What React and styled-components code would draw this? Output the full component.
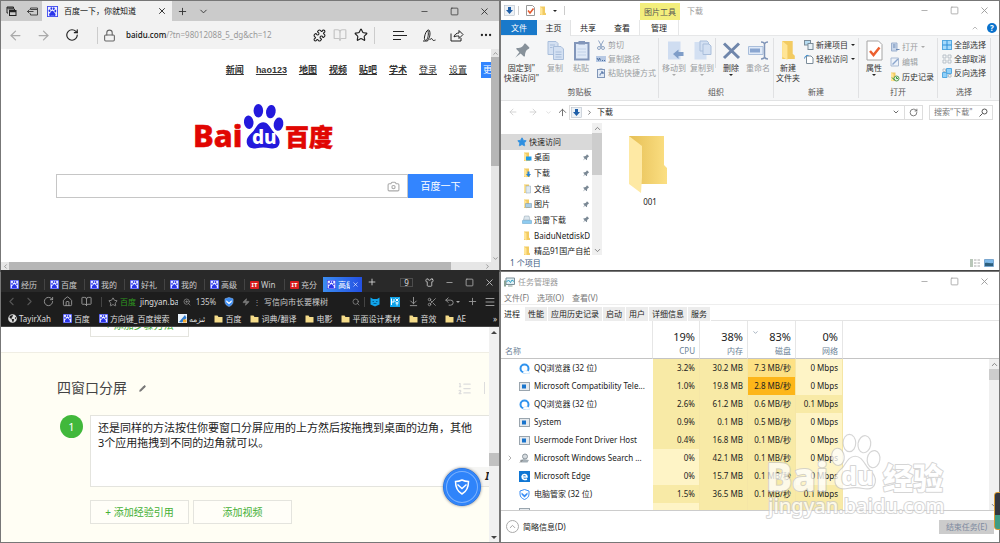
import styled, { createGlobalStyle, css } from "styled-components";
import {
  ArrowDownToLine,
  ArrowLeft,
  ArrowRight,
  ArrowUp,
  BookOpen,
  Camera,
  ChevronDown,
  ChevronLeft,
  ChevronRight,
  ChevronUp,
  House,
  Lock,
  Menu,
  Minus,
  Plus,
  Puzzle,
  RotateCw,
  Scissors,
  Search,
  Shirt,
  Square,
  Star,
  Undo2,
  X,
  Zap,
  ZoomIn,
  ListOrdered,
  Pencil,
  Ellipsis,
} from "lucide-react";
import { TiPin } from "react-icons/ti";
import { FaGlobeAmericas } from "react-icons/fa";

const GlobalStyle = createGlobalStyle`
  *, *::before, *::after {
    box-sizing: border-box;
  }

  body {
    margin: 0;
    background: #222;
    font-family: "Noto Sans", "Noto Sans CJK SC", sans-serif;
    font-size: 8px;
    line-height: 12px;
    color: #222;
  }

  button, input, textarea {
    margin: 0;
    padding: 0;
    border: 0;
    background: none;
    font: inherit;
    color: inherit;
  }

  a {
    color: inherit;
  }

  ul {
    margin: 0;
    padding: 0;
    list-style: none;
  }

  svg {
    display: block;
    flex: none;
  }
`;

/* ---------- shared ---------- */

const Desktop = styled.main`
  position: relative;
  display: grid;
  grid-template-columns: repeat(2, minmax(0, 1fr));
  grid-template-rows: minmax(271px, 1fr) minmax(272px, 1fr);
  height: 100vh;
  overflow: hidden;
`;

const Window = styled.section`
  position: relative;
  display: flex;
  flex-direction: column;
  min-width: 0;
  min-height: 0;
  overflow: hidden;
  background: #fff;
  border: 1px solid #777;
  border-top-color: ${(p) => p.$top || "#777"};
  border-bottom-color: ${(p) => p.$bottom || "#777"};
`;

const Bar = styled.div`
  display: flex;
  align-items: center;
  flex: none;
  white-space: nowrap;
`;

const Cell = styled.button`
  display: flex;
  align-items: center;
  justify-content: center;
  flex: none;
  width: ${(p) => p.$w || 20}px;
  color: ${(p) => p.$color || "inherit"};
`;

const Spacer = styled.div`
  flex: 1;
`;

const Divider = styled.span`
  flex: none;
  width: 1px;
  height: ${(p) => p.$h || 12}px;
  background: ${(p) => p.$color || "#ccc"};
`;

const Controls = styled.div`
  display: flex;
  align-items: center;
  color: ${(p) => p.$color};
`;

const Scrollbar = styled.div`
  display: flex;
  flex-direction: ${(p) => (p.$horizontal ? "row" : "column")};
  flex: none;
  ${(p) => (p.$horizontal ? "height: 8px" : `width: ${p.$size || 8}px`)};
  background: ${(p) => p.$track || "#e6e6e6"};
`;

const ScrollButton = styled.button`
  display: flex;
  align-items: center;
  justify-content: center;
  flex: none;
  width: ${(p) => p.$size || 8}px;
  height: ${(p) => p.$size || 8}px;
  color: #666;
`;

const Track = styled.div`
  display: flex;
  flex-direction: inherit;
  flex: 1;
`;

const Gap = styled.div`
  flex: ${(p) => p.$grow};
`;

const Thumb = styled.div`
  flex: ${(p) => p.$grow};
  background: ${(p) => p.$color || "#b6b6b6"};
`;

function WindowControls({ color, gap = 30 }) {
  return (
    <Controls $color={color}>
      <Cell $w={gap} aria-label="Minimize">
        <Minus size={9} strokeWidth={2} />
      </Cell>
      <Cell $w={gap} aria-label="Maximize">
        <Square size={9} strokeWidth={2} />
      </Cell>
      <Cell $w={gap} aria-label="Close">
        <X size={11} strokeWidth={2} />
      </Cell>
    </Controls>
  );
}

function PawShape() {
  return (
    <>
      <ellipse cx="6" cy="19" rx="5" ry="7" transform="rotate(-6 6 19)" />
      <ellipse cx="16" cy="7" rx="5" ry="7" />
      <ellipse cx="29" cy="8" rx="5" ry="7" transform="rotate(10 29 8)" />
      <ellipse cx="37" cy="21" rx="5" ry="7" transform="rotate(10 37 21)" />
      <path d="M21 19c-5 0-7 5-10 9-4 4-8 7-7 13 1 5 6 6 10 5 5-1 9-1 14 0 5 1 9 0 10-5 1-6-4-9-7-13-3-4-5-9-10-9z" />
    </>
  );
}

function BaiduIcon({ size = 9 }) {
  return (
    <svg width={size} height={size} viewBox="0 0 56 56">
      <rect width="56" height="56" rx="3" fill="#eef0ff" />
      <rect x="2" y="2" width="52" height="52" fill="none" stroke="#3c46ee" strokeWidth="5" />
      <g fill="#2a35ea" transform="translate(7 6) scale(.96)">
        <PawShape />
      </g>
    </svg>
  );
}

function FolderIcon({ size = 10, children }) {
  return (
    <svg width={size} height={size} viewBox="0 0 20 20">
      <path d="M4 1h10v12l2 2v3H4z" fill="#f2cb62" />
      <path d="M4 1l5 4v14l-5-3z" fill="#ffe596" />
      {children}
    </svg>
  );
}

function DownloadsIcon() {
  return (
    <svg width="11" height="11" viewBox="0 0 22 22">
      <rect x="1" y="1" width="20" height="20" fill="#eef2f6" stroke="#a9b4bf" />
      <path d="M8 4h6v6h4l-7 8-7-8h4z" fill="#1f5fa8" />
    </svg>
  );
}

/* ---------- Edge ---------- */

const EdgeTabs = styled(Bar)`
  height: 20px;
  background: #cbcbcb;
  color: #333;
`;

const EdgeTab = styled.div`
  display: flex;
  align-items: center;
  align-self: stretch;
  gap: 6px;
  width: 130px;
  padding: 0 5px;
  background: #f2f2f2;
  color: #111;
`;

const EdgeToolbar = styled(Bar)`
  height: 28px;
  padding-right: 6px;
  background: #f2f2f2;
  color: #222;
`;

const EdgeUrl = styled.div`
  flex: 1;
  overflow: hidden;
  padding-left: 8px;
  color: #999;

  b {
    font-weight: 500;
    color: #111;
  }
`;

const EdgeBody = styled.div`
  display: flex;
  flex: 1;
  min-height: 0;
`;

const BaiduPage = styled.div`
  flex: 1;
  min-width: 0;
  overflow: hidden;
`;

const BaiduNav = styled.nav`
  display: flex;
  align-items: center;
  justify-content: flex-end;
  gap: 12px;
  height: 16px;
  margin-top: 13px;
  font-family: "Liberation Sans", "Noto Sans CJK SC", sans-serif;
  font-size: 9px;
  white-space: nowrap;
`;

const NavLink = styled.a`
  font-weight: ${(p) => (p.$bold ? 700 : 400)};
  color: #333;
`;

const MoreLink = styled.a`
  width: 10px;
  height: 16px;
  margin-left: 2px;
  padding-left: 2px;
  overflow: hidden;
  background: #3385ff;
  color: #fff;
  line-height: 16px;
  text-decoration: none;
`;

const BaiduLogo = styled.svg`
  margin: 25px auto 23px 192px;
  overflow: visible;
  font-family: "Noto Sans", "Noto Sans CJK SC", sans-serif;
  font-weight: 800;
`;

const SearchForm = styled.form`
  display: flex;
  height: 24px;
  margin: 0 18px 0 55px;
`;

const SearchBox = styled.label`
  display: flex;
  align-items: center;
  flex: 1;
  padding: 0 7px;
  border: 1px solid #c6c6c6;
  color: #aaa;

  input {
    flex: 1;
    min-width: 0;
    outline: none;
  }
`;

const SearchButton = styled.button`
  width: 65px;
  background: #3385ff;
  color: #fff;
  font-size: 10px;
`;

function EdgeWindow() {
  return (
    <Window $bottom="#2a2a2a">
      <EdgeTabs>
        <Cell $w={21} aria-label="Tabs set aside">
          <svg width="11" height="11" viewBox="0 0 22 22" fill="none" stroke="#222" strokeWidth="2">
            <path d="M4 14H2V2h13v3M2 4h13" />
            <path d="M5 6h12v3" />
            <rect x="7" y="9" width="13" height="10" />
            <path d="M7 11h13" strokeWidth="3" />
          </svg>
        </Cell>
        <Cell $w={20} aria-label="Set tabs aside">
          <svg width="11" height="9" viewBox="0 0 22 18" fill="none" stroke="#444" strokeWidth="2">
            <path d="M7 5V2h14v14H7v-3M7 5h14M0 9h13M5 5L1 9l4 4" />
          </svg>
        </Cell>
        <EdgeTab>
          <BaiduIcon size={11} />
          百度一下，你就知道
          <Spacer />
          <X size={10} />
        </EdgeTab>
        <Cell $w={21} aria-label="New tab">
          <Plus size={11} />
        </Cell>
        <Cell $w={20} aria-label="Tab previews">
          <ChevronDown size={11} />
        </Cell>
        <Spacer />
        <WindowControls color="#333" />
      </EdgeTabs>
      <EdgeToolbar>
        <Cell $w={28} $color="#aaa" aria-label="Back">
          <ArrowLeft size={15} strokeWidth={2} />
        </Cell>
        <Cell $w={28} $color="#aaa" aria-label="Forward">
          <ArrowRight size={15} strokeWidth={2} />
        </Cell>
        <Cell $w={30} aria-label="Refresh">
          <RotateCw size={14} strokeWidth={2} />
        </Cell>
        <Cell $w={20} as="span">
          <Divider $h={17} />
        </Cell>
        <Cell $w={4} as="span" $color="#666">
          <Lock size={13} strokeWidth={2} />
        </Cell>
        <Cell $w={7} as="span" />
        <EdgeUrl>
          <b>baidu.com</b>/?tn=98012088_5_dg&amp;ch=12
        </EdgeUrl>
        <Cell $w={20} aria-label="Extensions">
          <Puzzle size={13} strokeWidth={2} />
        </Cell>
        <Cell $w={22} $color="#c4c4c4" aria-label="Reading view">
          <BookOpen size={14} strokeWidth={2} />
        </Cell>
        <Cell $w={20} aria-label="Favorite">
          <Star size={14} strokeWidth={2} />
        </Cell>
        <Cell $w={6} as="span">
          <Divider $h={17} />
        </Cell>
        <Cell $w={46} aria-label="Hub">
          <svg width="14" height="9" viewBox="0 0 14 9" stroke="#222" fill="none">
            <path d="M0 .5h11M0 4.5h14M0 8.5h8" />
          </svg>
        </Cell>
        <Cell $w={12} aria-label="Add notes">
          <svg width="14" height="13" viewBox="0 0 28 26" fill="none" stroke="#222" strokeWidth="2">
            <path d="M2 24h9c2-4 5-8 5-14 0-5-1-9-4-8S6 10 5 16s2 8 4 6 5-10 3-18M15 22c2-3 5-4 6-1s3 2 6 1" />
          </svg>
        </Cell>
        <Cell $w={44} aria-label="Share">
          <svg width="14" height="13" viewBox="0 0 28 26" fill="none" stroke="#222" strokeWidth="2">
            <path d="M2 9v15h20v-6M8 16c1-6 6-8 10-8V3l8 8-8 8v-5c-4 0-8 0-10 2z" />
          </svg>
        </Cell>
        <Cell $w={14} aria-label="More">
          <Ellipsis size={14} strokeWidth={2} />
        </Cell>
      </EdgeToolbar>
      <EdgeBody>
        <BaiduPage>
          <BaiduNav>
            {["新闻", "hao123", "地图", "视频", "贴吧", "学术"].map((t) => (
              <NavLink key={t} $bold href="#">
                {t}
              </NavLink>
            ))}
            <NavLink href="#">登录</NavLink>
            <NavLink href="#">设置</NavLink>
            <MoreLink href="#">更</MoreLink>
          </BaiduNav>
          <BaiduLogo width="144" height="48" viewBox="0 0 144 48">
            <g fill="#e10602" stroke="#e10602" strokeWidth=".6">
              <text x="0" y="44" fontSize="31">
                Bai
              </text>
              <text x="92" y="43" fontSize="24">
                百度
              </text>
            </g>
            <g fill="#2319dc" transform="translate(50 1) scale(.96)">
              <PawShape />
            </g>
            <text x="59" y="41" fontSize="19" fill="#fff">
              du
            </text>
          </BaiduLogo>
          <SearchForm>
            <SearchBox>
              <input aria-label="搜索" />
              <Camera size={13} strokeWidth={2} />
            </SearchBox>
            <SearchButton type="button">百度一下</SearchButton>
          </SearchForm>
        </BaiduPage>
        <Scrollbar>
          <ScrollButton aria-label="Up">
            <ChevronUp size={7} />
          </ScrollButton>
          <Track>
            <Thumb $grow={109} />
            <Gap $grow={88} />
          </Track>
          <ScrollButton aria-label="Down">
            <ChevronDown size={7} />
          </ScrollButton>
        </Scrollbar>
      </EdgeBody>
      <Scrollbar $horizontal>
        <ScrollButton aria-label="Left">
          <ChevronLeft size={7} />
        </ScrollButton>
        <Track>
          <Thumb $grow={443} />
          <Gap $grow={32} />
        </Track>
        <ScrollButton aria-label="Right">
          <ChevronRight size={7} />
        </ScrollButton>
        <Gap $grow="0 0 8px" />
      </Scrollbar>
    </Window>
  );
}

/* ---------- Explorer ---------- */

const TitleBar = styled(Bar)`
  height: 19px;
  color: #999;
`;

const ToolTab = styled.span`
  align-self: stretch;
  width: 40px;
  margin: 2px 7px 0 75px;
  background: #f3ee7c;
  color: #555;
  line-height: 17px;
  text-align: center;
`;

const RibbonTabs = styled(Bar)`
  height: 16px;
  border-bottom: 1px solid #e6e7e8;
`;

const RibbonTab = styled.button`
  flex: none;
  align-self: stretch;
  width: ${(p) => p.$w}px;

  ${(p) =>
    p.$file &&
    css`
      background: #1979ca;
      color: #fff;
    `}
  ${(p) =>
    p.$active &&
    css`
      border-right: 1px solid #e2e3e4;
      background: #f5f6f7;
      margin-bottom: -1px;
    `}
  ${(p) =>
    p.$tool &&
    css`
      border: 1px solid #e6e7e8;
      border-width: 0 1px;
    `}
`;

const Help = styled.span`
  width: 10px;
  height: 10px;
  margin: 0 2px 0 8px;
  border-radius: 50%;
  background: #0a72cc;
  color: #fff;
  font-weight: 700;
  line-height: 10px;
  text-align: center;
`;

const Ribbon = styled.div`
  display: flex;
  flex: none;
  height: 65px;
  background: #f5f6f7;
  border-bottom: 1px solid #e2e3e4;
`;

const Group = styled.div`
  display: flex;
  flex-direction: column;
  flex: none;
  width: ${(p) => p.$w}px;
  margin: 2px 0;
  border-right: 1px solid #e0e1e3;
`;

const GroupItems = styled.div`
  display: flex;
  flex: 1;
`;

const GroupLabel = styled.div`
  color: #555;
  text-align: center;
`;

const BigButton = styled.button`
  display: flex;
  flex-direction: column;
  align-items: center;
  flex: none;
  width: ${(p) => p.$w || 26}px;
  padding-top: 2px;
  color: ${(p) => (p.$off ? "#9a9da1" : "#333")};
  line-height: 10px;
  white-space: nowrap;

  svg:first-child {
    margin-bottom: 2px;
  }
`;

const SmallList = styled.div`
  display: flex;
  flex-direction: column;
  gap: ${(p) => p.$gap || 1}px;
  padding: ${(p) => p.$top || 0}px 0 0 ${(p) => p.$pad || 2}px;
`;

const SmallButton = styled.button`
  display: flex;
  align-items: center;
  gap: 2px;
  height: 13px;
  color: ${(p) => (p.$off ? "#9a9da1" : "#333")};
  white-space: nowrap;
`;

const Caret = styled.span`
  width: 0;
  margin: ${(p) => (p.$under ? "1px 0 0" : "0 0 0 1px")};
  border: 2px solid transparent;
  border-top-color: ${(p) => (p.$off ? "#aaa" : "#222")};
  border-bottom: 0;
`;

const AddressBar = styled(Bar)`
  height: 22px;
  color: #999;
`;

const PathBox = styled.div`
  display: flex;
  align-items: center;
  flex: 1;
  height: 15px;
  gap: 4px;
  padding-left: 1px;
  border: 1px solid #ddd;
  color: #222;
`;

const FindBox = styled.label`
  display: flex;
  align-items: center;
  width: 64px;
  height: 15px;
  margin: 0 6px;
  padding: 0 4px;
  border: 1px solid #ddd;
  color: #777;

  input {
    flex: 1;
    min-width: 0;
  }

  input::placeholder {
    color: #777;
    opacity: 1;
  }
`;

const ExplorerBody = styled.div`
  display: flex;
  flex: 1;
  min-height: 0;
  overflow: hidden;
`;

const Places = styled.ul`
  display: flex;
  flex-direction: column;
  flex: none;
  width: 91px;
  height: 125px;
  margin-top: 11px;
`;

const Place = styled.li`
  display: flex;
  align-items: center;
  flex: 1;
  gap: 2px;
  padding: 0 2px 0 ${(p) => (p.$top ? 16 : 21)}px;
  overflow: hidden;
  white-space: nowrap;
  background: ${(p) => (p.$top ? "#d9d9d9" : "transparent")};

  span {
    flex: 1;
    overflow: hidden;
  }
`;

const Files = styled.div`
  flex: 1;
  padding: 12px 0 0 22px;
`;

const FileItem = styled.figure`
  display: flex;
  flex-direction: column;
  align-items: center;
  gap: 1px;
  width: 52px;
  margin: 0;
`;

const StatusBar = styled(Bar)`
  height: 15px;
  padding: 0 5px 0 9px;
  gap: 4px;
  color: #3a5a80;
`;

function CopyIcon() {
  return (
    <svg width="19" height="21" viewBox="0 0 38 42" fill="#d3e0f2" stroke="#a9bedb" strokeWidth="2">
      <path d="M4 3h16l4 4v22H4z" />
      <path d="M15 13h15l5 5v21H15z" />
      <path d="M8 10h10M8 15h5M19 24h12M19 29h12M19 34h12" />
    </svg>
  );
}

function CopyToIcon() {
  return (
    <svg width="19" height="21" viewBox="0 0 38 42" fill="#d3e0f2" stroke="#a9bedb" strokeWidth="2">
      <path d="M3 4h24v35H3z" stroke="none" />
      <path d="M14 2h14l3 3v17H14z" />
      <path d="M20 8h12l4 4v17H20z" />
    </svg>
  );
}

function TinyIcon({ kind }) {
  return (
    <svg width="10" height="10" viewBox="0 0 20 20" fill="none" strokeWidth="2">
      {kind === "cut" && (
        <g stroke="#8fa5c4">
          <path d="M5 1l7 13M15 1L8 14" />
          <circle cx="6" cy="16" r="3" />
          <circle cx="14" cy="16" r="3" />
        </g>
      )}
      {kind === "path" && (
        <>
          <rect x="0" y="4" width="20" height="12" fill="#b7c9e4" />
          <path d="M2 8l3 5 2-5 2 5M12 13h2M16 13h2" stroke="#4d6f9f" />
        </>
      )}
      {kind === "link" && (
        <>
          <rect x="3" y="3" width="14" height="16" fill="#e2eaf5" stroke="#8096b8" />
          <path d="M7 1h6v3H7z" fill="#8096b8" />
          <path d="M8 15c0-4 2-5 5-5M10 8h4v4" stroke="#41659c" />
        </>
      )}
      {kind === "newitem" && (
        <>
          <rect x="1" y="1" width="12" height="9" fill="#b6dcf1" stroke="#7b8c99" />
          <rect x="8" y="7" width="10" height="12" fill="#e8f2f8" stroke="#7b8c99" />
        </>
      )}
      {kind === "easy" && (
        <>
          <path d="M5 4h9l4 4v11H5z" fill="#fff" stroke="#7b8c99" />
          <path d="M1 9c1-5 4-7 8-6" stroke="#3c8dd0" />
        </>
      )}
      {kind === "open" && (
        <>
          <path d="M3 2h11v16H3z" fill="#c8d6ea" stroke="#9db1cf" />
          <path d="M6 6h5M6 10h5M12 15h7" stroke="#6d8ab5" />
        </>
      )}
      {kind === "edit" && (
        <>
          <path d="M2 2h15v16H2z" fill="#edf2f9" stroke="#a9bad3" />
          <path d="M5 15L16 4" stroke="#8ba6cd" strokeWidth="3" />
        </>
      )}
      {kind === "history" && (
        <>
          <path d="M2 1h9v17H2z" fill="#f2cb62" />
          <path d="M2 1l5 3v15l-5-2z" fill="#ffe596" />
          <circle cx="13" cy="13" r="5" fill="#e4efe4" stroke="#5a9a54" />
          <path d="M4 11l5 5M13 10v3h3" stroke="#2f9a35" />
        </>
      )}
      {kind === "all" && (
        <>
          <rect x="1" y="1" width="18" height="18" fill="#a5dafb" stroke="#56a9e0" />
          <path d="M10 1v18M1 10h18" stroke="#2f8fd8" />
        </>
      )}
      {kind === "none" && (
        <g stroke="#b8c0c8">
          <path d="M2 2h6v6H2zM12 2h6v6h-6zM2 12h6v6H2zM12 12h6v6h-6z" />
        </g>
      )}
      {kind === "invert" && (
        <>
          <path d="M9 1h10v10H9zM1 9h9v10H1z" fill="#8fd0fa" stroke="#56a9e0" />
          <path d="M2 2h5v5H2zM13 13h5v5h-5z" stroke="#b8c0c8" />
        </>
      )}
    </svg>
  );
}

const places = [
  { name: "桌面", pin: true, badge: <path d="M8 9h11v8H8z" fill="#1e9be8" /> },
  { name: "下载", pin: true, badge: <path d="M11 7h4v5h3l-5 6-5-6h3z" fill="#2583d8" /> },
  { name: "文档", pin: true, badge: <path d="M8 4h9v14H8z" fill="#dfeaf2" stroke="#8aa3b5" /> },
  { name: "图片", pin: true, badge: <path d="M7 9h12v8H7z" fill="#a9cde6" stroke="#7795a8" /> },
  { name: "迅雷下载", pin: true, drive: true },
  { name: "BaiduNetdiskDownload" },
  { name: "精品91国产自拍" },
];

function ExplorerWindow() {
  return (
    <Window $bottom="#444">
      <TitleBar>
        <Cell $w={17} as="span">
          <DownloadsIcon />
        </Cell>
        <Divider $h={9} />
        <Cell $w={22} aria-label="属性">
          <svg width="9" height="11" viewBox="0 0 18 22">
            <path d="M1 1h12l4 4v16H1z" fill="#fff" stroke="#999" strokeWidth="2" />
            <path d="M4 11l4 5 7-9" fill="none" stroke="#e5562a" strokeWidth="3" />
          </svg>
        </Cell>
        <Cell $w={4} aria-label="新建文件夹">
          <FolderIcon />
        </Cell>
        <Cell $w={19} aria-label="自定义">
          <Caret />
        </Cell>
        <Divider $h={9} />
        <ToolTab>图片工具</ToolTab>
        下载
        <Spacer />
        <WindowControls color="#999" />
      </TitleBar>
      <RibbonTabs>
        <RibbonTab $w={36} $file>
          文件
        </RibbonTab>
        <RibbonTab $w={34} $active>
          主页
        </RibbonTab>
        <RibbonTab $w={34}>共享</RibbonTab>
        <RibbonTab $w={34}>查看</RibbonTab>
        <RibbonTab $w={40} $tool>
          管理
        </RibbonTab>
        <Spacer />
        <ChevronUp size={8} color="#999" />
        <Help>?</Help>
      </RibbonTabs>
      <Ribbon>
        <Group $w={158}>
          <GroupItems>
            <BigButton $w={41}>
              <TiPin size={21} color="#87919a" />
              固定到"
              <br />
              快速访问"
            </BigButton>
            <BigButton $off>
              <CopyIcon />
              复制
            </BigButton>
            <BigButton $off>
              <svg width="19" height="21" viewBox="0 0 38 42">
                <rect x="6" y="6" width="27" height="33" fill="#dfe9f7" stroke="#8296ba" strokeWidth="4" />
                <rect x="13" y="2" width="13" height="7" fill="#8296ba" />
                <path d="M11 18h17M11 24h17M11 30h17" stroke="#c1d1e8" strokeWidth="2" />
              </svg>
              粘贴
            </BigButton>
            <SmallList>
              <SmallButton $off>
                <TinyIcon kind="cut" />
                剪切
              </SmallButton>
              <SmallButton $off>
                <TinyIcon kind="path" />
                复制路径
              </SmallButton>
              <SmallButton $off>
                <TinyIcon kind="link" />
                粘贴快捷方式
              </SmallButton>
            </SmallList>
          </GroupItems>
          <GroupLabel>剪贴板</GroupLabel>
        </Group>
        <Group $w={115}>
          <GroupItems>
            <BigButton $off $w={30}>
              <svg width="19" height="21" viewBox="0 0 38 42">
                <path d="M6 3h25v36H6z" fill="#cfddf1" />
                <path d="M16 28l11-9v5h10v8H27v6z" fill="#7f9dc8" />
              </svg>
              移动到
              <Caret $under $off />
            </BigButton>
            <BigButton $off>
              <CopyToIcon />
              复制到
              <Caret $under $off />
            </BigButton>
            <Divider $h={30} $color="#dcdde0" />
            <BigButton $w={30}>
              <svg width="19" height="21" viewBox="0 0 38 42">
                <path d="M4 7l30 29M34 7L4 36" stroke="#6f86ab" strokeWidth="6" />
              </svg>
              删除
              <Caret $under />
            </BigButton>
            <BigButton $off $w={24}>
              <svg width="21" height="21" viewBox="0 0 42 42" fill="none">
                <path d="M1 13h29v16H1z" fill="#dfe9f7" stroke="#a9bedb" strokeWidth="2" />
                <path d="M4 17h20v8H4z" fill="#8aa6d0" />
                <path d="M26 4c4 0 6 1 7 4 1-3 3-4 7-4M33 8v26M26 38c4 0 6-1 7-4 1 3 3 4 7 4" stroke="#8095b8" strokeWidth="3" />
              </svg>
              重命名
            </BigButton>
          </GroupItems>
          <GroupLabel>组织</GroupLabel>
        </Group>
        <Group $w={85}>
          <GroupItems>
            <BigButton $w={28}>
              <FolderIcon size={21} />
              新建
              <br />
              文件夹
            </BigButton>
            <SmallList>
              <SmallButton>
                <TinyIcon kind="newitem" />
                新建项目
                <Caret />
              </SmallButton>
              <SmallButton>
                <TinyIcon kind="easy" />
                轻松访问
                <Caret />
              </SmallButton>
            </SmallList>
          </GroupItems>
          <GroupLabel>新建</GroupLabel>
        </Group>
        <Group $w={79}>
          <GroupItems>
            <BigButton $w={30}>
              <svg width="17" height="21" viewBox="0 0 34 42" fill="none">
                <path d="M2 2h23l7 7v31H2z" fill="#fff" stroke="#a5a5a5" strokeWidth="2" />
                <path d="M8 22l7 8 12-15" stroke="#ec6030" strokeWidth="5" />
              </svg>
              属性
              <Caret $under />
            </BigButton>
            <SmallList $gap={2} $pad={1} $top={2}>
              <SmallButton $off>
                <TinyIcon kind="open" />
                打开
                <Caret $off />
              </SmallButton>
              <SmallButton $off>
                <TinyIcon kind="edit" />
                编辑
              </SmallButton>
              <SmallButton>
                <TinyIcon kind="history" />
                历史记录
              </SmallButton>
            </SmallList>
          </GroupItems>
          <GroupLabel>打开</GroupLabel>
        </Group>
        <Group $w={53}>
          <GroupItems>
            <SmallList $pad={4}>
              <SmallButton>
                <TinyIcon kind="all" />
                全部选择
              </SmallButton>
              <SmallButton>
                <TinyIcon kind="none" />
                全部取消
              </SmallButton>
              <SmallButton>
                <TinyIcon kind="invert" />
                反向选择
              </SmallButton>
            </SmallList>
          </GroupItems>
          <GroupLabel>选择</GroupLabel>
        </Group>
      </Ribbon>
      <AddressBar>
        <Cell $w={24} $color="#ccc" aria-label="后退">
          <ArrowLeft size={10} />
        </Cell>
        <Cell $w={16} $color="#ccc" aria-label="前进">
          <ArrowRight size={10} />
        </Cell>
        <Cell $w={14} $color="#ccc" aria-label="最近">
          <ChevronDown size={7} />
        </Cell>
        <Cell $w={14} $color="#666" aria-label="上移">
          <ArrowUp size={11} />
        </Cell>
        <PathBox>
          <DownloadsIcon />
          <ChevronRight size={7} />
          下载
          <Spacer />
          <ChevronDown size={8} />
          <Divider $h={13} $color="#ddd" />
          <RotateCw size={9} color="#555" />
          <span />
        </PathBox>
        <FindBox>
          <input aria-label="搜索下载" placeholder={'搜索"下载"'} />
          <svg width="9" height="9" viewBox="0 0 18 18" fill="none" stroke="#555" strokeWidth="2">
            <circle cx="11" cy="7" r="5" />
            <path d="M7 11l-6 6" />
          </svg>
        </FindBox>
      </AddressBar>
      <ExplorerBody>
        <Places>
          <Place $top>
            <Star size={10} fill="#2f8fe0" color="#2f8fe0" />
            <span>快速访问</span>
          </Place>
          {places.map((p) => (
            <Place key={p.name}>
              {p.drive ? (
                <svg width="10" height="10" viewBox="0 0 20 20">
                  <path d="M5 2h9l2 8H3z" fill="#dce6ed" stroke="#8fa2b0" />
                  <path d="M1 11h18v6H1z" fill="#8ecbf0" stroke="#5d9ec8" />
                </svg>
              ) : (
                <FolderIcon>{p.badge}</FolderIcon>
              )}
              <span>{p.name}</span>
              {p.pin && <TiPin size={9} color="#7a8894" />}
            </Place>
          ))}
        </Places>
        <Scrollbar $size={10} $track="#f0f0f0">
          <ScrollButton $size={10} aria-label="Up">
            <ChevronUp size={9} />
          </ScrollButton>
          <Track>
            <Thumb $grow={42} $color="#cdcdcd" />
            <Gap $grow={70} />
          </Track>
          <ScrollButton $size={10} aria-label="Down">
            <ChevronDown size={9} />
          </ScrollButton>
        </Scrollbar>
        <Files>
          <FileItem>
            <svg width="46" height="60" viewBox="0 0 46 60">
              <defs>
                <linearGradient id="fold" x1="0" x2="1">
                  <stop offset="0" stopColor="#e6bf55" />
                  <stop offset="1" stopColor="#fbdf83" />
                </linearGradient>
              </defs>
              <path d="M2 1h35v29l3 3v16H2z" fill="url(#fold)" />
              <path d="M2 1l13 10v31l-1 16L2 49z" fill="#fee9a4" />
            </svg>
            <figcaption>001</figcaption>
          </FileItem>
        </Files>
      </ExplorerBody>
      <StatusBar>
        1 个项目
        <Spacer />
        <svg width="10" height="8" viewBox="0 0 20 16">
          <path d="M0 0h6v16H0z" fill="#b9c7b9" />
          <path d="M8 2h12M8 8h12M8 14h12" stroke="#aaa" strokeWidth="2" strokeDasharray="5 2" />
        </svg>
        <svg width="10" height="8" viewBox="0 0 20 16">
          <path d="M1 1h18v14H1z" fill="#7db9ea" stroke="#7aa7cf" strokeWidth="2" />
          <path d="M2 8c6-2 10 2 16 0v6H2z" fill="#2d5f7d" />
        </svg>
      </StatusBar>
    </Window>
  );
}

/* ---------- QQ browser ---------- */

const QqTabs = styled(Bar)`
  height: 20px;
  padding-left: 4px;
  background: #292929;
  color: #ddd;
`;

const QqTab = styled.div`
  display: flex;
  align-items: center;
  flex: none;
  gap: 2px;
  width: ${(p) => (p.$active ? 39 : 40)}px;
  height: 15px;
  margin-top: 5px;
  padding-left: 5px;
  color: ${(p) => (p.$active ? "#fff" : "#ccc")};

  ${(p) =>
    p.$active &&
    css`
      margin-left: -2px;
      padding: 0 3px 0 4px;
      background: linear-gradient(90deg, #3c8df2, #2350e2);
    `}
`;

const TabName = styled.div`
  flex: 1;
  min-width: 0;
  overflow: hidden;
`;

const ItBadge = styled.b`
  width: 9px;
  height: 8px;
  border-radius: 1px;
  background: #d81e1e;
  color: #fff;
  font-size: 6px;
  line-height: 8px;
  text-align: center;
`;

const Count = styled.span`
  width: 13px;
  height: 9px;
  margin-right: 6px;
  border: 1px solid #4d4d4d;
  line-height: 7px;
  text-align: center;
`;

const QqToolbar = styled(Bar)`
  height: 19px;
  padding-left: 1px;
  background: #1d1d1d;
  color: #999;
`;

const Host = styled.div`
  width: 58px;
  overflow: hidden;
  color: #ddd;

  b {
    margin-right: 4px;
    font-weight: 400;
    color: #2e9b1f;
  }
`;

const QqSearch = styled.label`
  display: flex;
  align-items: center;
  flex: 1;
  min-width: 0;
  padding-right: 4px;

  input {
    flex: 1;
    min-width: 0;
    color: #ccc;
  }
`;

const Bookmarks = styled(Bar)`
  height: 16px;
  gap: 9px;
  padding: 0 2px 0 7px;
  background: #1d1d1d;
  border-bottom: 1px solid #444;
  color: #ddd;
`;

const Bookmark = styled.a`
  display: flex;
  align-items: center;
  gap: 2px;
  text-decoration: none;

  &:first-child {
    margin-right: 3px;
  }
`;

const QqBody = styled.div`
  display: flex;
  flex: 1;
  min-height: 0;
`;

const QqPage = styled.div`
  position: relative;
  display: flex;
  flex-direction: column;
  flex: 1;
  min-width: 0;
  overflow: hidden;
  background: #fffef4;
`;

const TopStrip = styled.div`
  display: flex;
  align-items: flex-start;
  height: 26px;
  padding-left: 89px;
  background: #fff;
  border-bottom: 1px solid #f0eee4;
`;

const AddButton = styled.button`
  width: 99px;
  height: 24px;
  border: 1px solid #e4e4de;
  background: ${(p) => (p.$clipped ? "#fff" : "#fffef8")};
  color: #45b035;
  font-size: 10px;
  line-height: 22px;

  ${(p) => p.$clipped && "margin-top: -14px;"}
`;

const StepTitle = styled.h2`
  display: flex;
  align-items: center;
  gap: 12px;
  margin: 25px 4px 17px 56px;
  color: #444;
  font-size: 14px;
  font-weight: 400;
  line-height: 20px;
`;

const StepRow = styled.div`
  display: flex;
  align-items: flex-start;
  gap: 7px;
  padding-left: 59px;
`;

const StepNumber = styled.span`
  flex: none;
  width: 23px;
  height: 23px;
  border-radius: 50%;
  background: #41b83b;
  color: #fff;
  font-size: 11px;
  line-height: 23px;
  text-align: center;
`;

const StepText = styled.textarea`
  flex: 1;
  min-width: 0;
  height: 72px;
  padding: 4px 0 0 7px;
  border: 1px solid #e4e4de;
  border-right: 0;
  overflow: hidden;
  background: #fff;
  color: #222;
  font-size: 11px;
  line-height: 15px;
  white-space: pre;
  resize: none;
`;

const AddRow = styled.div`
  display: flex;
  gap: 4px;
  padding: 13px 0 0 89px;
`;

/* floats over the editor */
const GuardButton = styled.button`
  position: absolute;
  right: 8px;
  bottom: 36px;
  display: flex;
  align-items: center;
  justify-content: center;
  width: 38px;
  height: 38px;
  border: 1px solid #2a78e8;
  border-radius: 50%;
  background: #2f84fa;
  box-shadow: inset 0 0 0 2px #2f84fa, inset 0 0 0 3px #7db2fc, 0 0 3px #888;
`;

/* flyout tucked behind the guard button */
const Flyout = styled.div`
  position: absolute;
  right: 0;
  bottom: 56px;
  width: 30px;
  height: 19px;
  background: #f6f6f4;
  font-size: 10px;
  font-style: italic;
  font-weight: 700;
  line-height: 19px;
  text-align: right;
`;

function ShieldIcon() {
  return (
    <svg width="10" height="10" viewBox="0 0 22 22">
      <path d="M11 1l9 3v6c0 6-4 9-9 11-5-2-9-5-9-11V4z" fill="#3b8df5" stroke="#a8cdfb" />
      <path d="M5 7l6 5 6-5v4l-6 5-6-5z" fill="#fff" />
    </svg>
  );
}

function YellowFolder() {
  return (
    <svg width="9" height="8" viewBox="0 0 18 16">
      <path d="M1 1h6l2 3h8v11H1z" fill="#f5dc8a" />
    </svg>
  );
}

const tabs = ["经历", "百度", "我的", "好礼", "我的", "高级", "Win", "充分"];
const folders = ["百度", "词典/翻译", "电影", "平面设计素材", "音效", "AE"];

function QqBrowserWindow() {
  return (
    <Window $top="#292929">
      <QqTabs>
        {tabs.map((t, i) => (
          <QqTab key={i}>
            {i < 6 ? <BaiduIcon /> : <ItBadge>IT</ItBadge>}
            <TabName>{t}</TabName>
            {i < 7 && <Divider $h={11} $color="#444" />}
          </QqTab>
        ))}
        <QqTab $active>
          <BaiduIcon />
          <TabName>高级</TabName>
          <X size={7} />
        </QqTab>
        <Cell $w={20} aria-label="New tab">
          <Plus size={10} />
        </Cell>
        <Spacer />
        <Count>9</Count>
        <Cell $w={20} aria-label="Skins">
          <Shirt size={9} />
        </Cell>
        <WindowControls color="#bbb" gap={20} />
      </QqTabs>
      <QqToolbar>
        <Cell $w={18} $color="#555" aria-label="Back">
          <ChevronLeft size={13} />
        </Cell>
        <Cell $w={19} $color="#555" aria-label="Forward">
          <ChevronRight size={13} />
        </Cell>
        <Cell $w={19} aria-label="Reload">
          <RotateCw size={11} />
        </Cell>
        <Cell $w={19} aria-label="Home">
          <House size={11} />
        </Cell>
        <Cell $w={19} aria-label="Reader">
          <BookOpen size={11} />
        </Cell>
        <Cell $w={10} as="span">
          <Divider $h={10} $color="#444" />
        </Cell>
        <Cell $w={14} aria-label="Bookmark">
          <Star size={10} />
        </Cell>
        <Host>
          <b>百度</b>jingyan.baidu.com
        </Host>
        <Cell $w={18} aria-label="Zoom">
          <ZoomIn size={8} />
        </Cell>
        <Cell $w={20} as="span" $color="#ccc">
          135%
        </Cell>
        <Cell $w={26} as="span">
          <ShieldIcon />
        </Cell>
        <Cell $w={8} as="span">
          <Zap size={8} fill="#777" color="#777" />
        </Cell>
        <Cell $w={14} as="span">
          ⋮
        </Cell>
        <QqSearch>
          <input aria-label="Search" defaultValue="写信向市长要棵树" />
          <Search size={8} />
        </QqSearch>
        <Divider $h={10} $color="#444" />
        <Cell $w={20} aria-label="Shopping">
          <svg width="10" height="10" viewBox="0 0 20 20">
            <path d="M1 1l5 3h8l5-3v14l-9 4-9-4z" fill="#11a4ea" />
            <path d="M5 9h3M12 9h3M7 13h6" stroke="#075f91" strokeWidth="2" />
          </svg>
        </Cell>
        <Cell $w={19} aria-label="Translate">
          <svg width="10" height="10" viewBox="0 0 20 20">
            <rect width="20" height="20" fill="#11a4ea" />
            <path d="M3 3v13M3 10h5V4M11 3l6 6M17 3l-6 6M14 10v7M11 12h6" fill="none" stroke="#fff" strokeWidth="2" />
          </svg>
        </Cell>
        <Cell $w={19} aria-label="Downloads">
          <ArrowDownToLine size={11} />
        </Cell>
        <Cell $w={18} aria-label="Screenshot">
          <Scissors size={10} />
        </Cell>
        <Cell $w={22} aria-label="Undo">
          <Undo2 size={11} />
          <Caret $off />
        </Cell>
        <Cell $w={18} aria-label="Add">
          <Plus size={11} />
        </Cell>
        <Cell $w={18} aria-label="Menu">
          <Menu size={12} />
        </Cell>
      </QqToolbar>
      <Bookmarks>
        <Bookmark href="#">
          <FaGlobeAmericas size={9} />
          TayirXah
        </Bookmark>
        <Bookmark href="#">
          <BaiduIcon />
          百度
        </Bookmark>
        <Bookmark href="#">
          <BaiduIcon />
          方向键_百度搜索
        </Bookmark>
        <Bookmark href="#">
          <svg width="9" height="9" viewBox="0 0 18 18">
            <rect width="18" height="18" fill="#e9f2fb" />
            <path d="M2 16L14 2l3 6-9 9z" fill="#2c7ad0" />
            <path d="M10 11h7v6h-7z" fill="#f0a52c" />
          </svg>
          ئىزمە
        </Bookmark>
        {folders.map((f) => (
          <Bookmark key={f} href="#">
            <YellowFolder />
            {f}
          </Bookmark>
        ))}
        <Spacer />
        »
      </Bookmarks>
      <QqBody>
        <QqPage>
          <TopStrip>
            <AddButton $clipped>+ 添加步骤方法</AddButton>
          </TopStrip>
          <StepTitle>
            四窗口分屏
            <Pencil size={7} fill="#777" color="#777" />
            <Spacer />
            <ListOrdered size={15} color="#ddd" />
            <Divider $h={12} $color="#ddd" />
          </StepTitle>
          <StepRow>
            <StepNumber>1</StepNumber>
            <StepText
              aria-label="步骤 1"
              defaultValue={
                "还是同样的方法按住你要窗口分屏应用的上方然后按拖拽到桌面的边角，其他\n3个应用拖拽到不同的边角就可以。"
              }
            />
          </StepRow>
          <AddRow>
            <AddButton>+ 添加经验引用</AddButton>
            <AddButton>添加视频</AddButton>
          </AddRow>
          <Flyout>I</Flyout>
          <GuardButton aria-label="电脑管家">
            <svg width="16" height="16" viewBox="0 0 32 32" fill="none" stroke="#fff" strokeWidth="3">
              <path d="M16 2c4 2 8 3 13 3 0 13-4 20-13 25C7 25 3 18 3 5c5 0 9-1 13-3z" />
              <path d="M7 11l9 8 9-8" />
            </svg>
          </GuardButton>
        </QqPage>
        <Scrollbar $size={10} $track="#f1f1f1">
          <ScrollButton $size={10} aria-label="Up">
            <svg width="6" height="3" viewBox="0 0 6 3">
              <path d="M0 3l3-3 3 3z" fill="#444" />
            </svg>
          </ScrollButton>
          <Track>
            <Gap $grow={116} />
            <Thumb $grow={13} $color="#c1c1c1" />
            <Gap $grow={66} />
          </Track>
          <ScrollButton $size={10} aria-label="Down">
            <svg width="6" height="3" viewBox="0 0 6 3">
              <path d="M0 0l3 3 3-3z" fill="#444" />
            </svg>
          </ScrollButton>
        </Scrollbar>
      </QqBody>
    </Window>
  );
}

/* ---------- Task manager ---------- */

const MenuBar = styled(Bar)`
  height: 14px;
  gap: 8px;
  padding-left: 3px;
  border-bottom: 1px solid #eee;
  color: #777;
`;

const TaskTabs = styled(Bar)`
  height: 16px;
  padding-top: 2px;
  border-bottom: 1px solid #e4e4e4;
`;

const TaskTab = styled.button`
  height: 14px;
  padding: 0 3px;
  border-right: 1px solid #fff;
  background: ${(p) => (p.$active ? "#fff" : "#ececec")};
  color: #222;

  &:first-child {
    padding-right: 4px;
  }
`;

const TaskBody = styled.div`
  display: flex;
  flex: 1;
  min-height: 0;
  overflow: hidden;
  border-bottom: 1px solid #ccc;
`;

const TableArea = styled.div`
  flex: 1;
  min-width: 0;
  overflow: hidden;
`;

const TaskTable = styled.table`
  width: 100%;
  table-layout: fixed;
  border-collapse: separate;
  border-spacing: 0;

  th {
    height: 38px;
    padding: 0 4px 1px 0;
    border-right: 1px solid #e6e6e6;
    border-bottom: 1px solid #c4c4c4;
    color: #6b7f96;
    font-weight: 400;
    text-align: right;
    vertical-align: bottom;
  }

  th:first-child {
    padding-left: 4px;
    text-align: left;
  }

  th:last-child {
    border-right: 0;
  }
`;

const Col = styled.col`
  width: ${(p) => p.$w}px;
`;

const Percent = styled.div`
  color: #222;
  font-size: 11px;
  line-height: 16px;
`;

const DiskHead = styled.div`
  display: flex;
  align-items: flex-start;
  justify-content: space-between;
  padding-left: 4px;
`;

const ProcessCell = styled.td`
  height: 18px;
  padding: 0 4px 0 5px;

  div {
    display: flex;
    align-items: center;
    gap: 4px;
    white-space: nowrap;
  }
`;

const Arrow = styled.span`
  flex: none;
  width: 9px;
`;

const heat = ["#fef4c6", "#f8eaa6", "#fde184", "#fdb619"];

const Value = styled.td`
  padding: 0 4px 0 0;
  border-right: 1px solid #f5e6a6;
  background: ${(p) => heat[p.$heat]};
  text-align: right;
  white-space: nowrap;
`;

const TaskFooter = styled(Bar)`
  height: 31px;
  gap: 4px;
  padding: 0 5px;
`;

const CircleIcon = styled.span`
  display: flex;
  align-items: center;
  justify-content: center;
  width: 13px;
  height: 13px;
  border: 1px solid #aaa;
  border-radius: 50%;
  color: #888;
`;

const EndButton = styled.button`
  width: 55px;
  height: 14px;
  background: #ccc;
  color: #7d8aa0;
`;

const ScrollHead = styled.div`
  flex: none;
  height: 38px;
  background: #fff;
  border-bottom: 1px solid #c4c4c4;
`;

function ProcessIcon({ kind }) {
  return (
    <svg width="11" height="11" viewBox="0 0 22 22">
      {kind === "qq" && (
        <>
          <circle cx="11" cy="11" r="8" fill="none" stroke="#2f93ee" strokeWidth="4" />
          <path d="M8 21c0-5 4-7 7-5 3-1 6 1 6 5z" fill="#fff" stroke="#bcdcf7" />
        </>
      )}
      {kind === "app" && (
        <>
          <rect x="1" y="3" width="20" height="16" fill="#e6eaee" stroke="#9aa5ae" strokeWidth="2" />
          <rect x="6" y="7" width="8" height="8" fill="#1a74cc" />
        </>
      )}
      {kind === "search" && (
        <>
          <circle cx="12" cy="7" r="5" fill="#d5dade" stroke="#8d979e" strokeWidth="2" />
          <path d="M2 14l8-2 10 2-3 5H4z" fill="#a5afb6" />
          <path d="M2 19l5-5" stroke="#777" strokeWidth="2" />
        </>
      )}
      {kind === "edge" && (
        <>
          <rect width="22" height="22" fill="#0f76d4" />
          <path d="M6 12h10c0-6-9-7-10-1 0 6 6 7 10 5" fill="none" stroke="#fff" strokeWidth="3" />
        </>
      )}
      {kind === "guard" && (
        <>
          <path d="M11 1l9 3v6c0 6-4 9-9 11-5-2-9-5-9-11V4z" fill="#fff" stroke="#3b8df5" strokeWidth="2" />
          <path d="M5 7l6 5 6-5v4l-6 6-6-6z" fill="#3b8df5" />
        </>
      )}
    </svg>
  );
}

const processes = [
  ["qq", "QQ浏览器 (32 位)", "3.2%", "30.2 MB", "7.3 MB/秒", "0 Mbps", 2],
  ["app", "Microsoft Compatibility Tele...", "1.0%", "19.8 MB", "2.8 MB/秒", "0 Mbps", 3],
  ["qq", "QQ浏览器 (32 位)", "2.6%", "61.2 MB", "0.6 MB/秒", "0.1 Mbps", 1],
  ["app", "System", "0.9%", "0.1 MB", "0.5 MB/秒", "0 Mbps", 1],
  ["app", "Usermode Font Driver Host", "0.4%", "16.8 MB", "0.1 MB/秒", "0 Mbps", 1],
  ["search", "Microsoft Windows Search ...", "0%", "42.1 MB", "0.1 MB/秒", "0 Mbps", 1],
  ["edge", "Microsoft Edge", "0%", "15.7 MB", "0.1 MB/秒", "0 Mbps", 1],
  ["guard", "电脑管家 (32 位)", "1.5%", "36.5 MB", "0.1 MB/秒", "0.1 Mbps", 1],
  ["app", "", "", "", "", "", 1],
];

function TaskManagerWindow() {
  return (
    <Window>
      <TitleBar>
        <Cell $w={17} as="span">
          <svg width="11" height="10" viewBox="0 0 22 20">
            <path d="M4 2h17v13H4z" fill="#dff0f5" stroke="#7c8f99" strokeWidth="2" />
            <path d="M5 10l4-4 4 5 3-5 4 3" fill="none" stroke="#32a0c4" strokeWidth="2" />
            <path d="M0 7h4v12H0zM8 17h9v2H8z" fill="#8ca498" />
          </svg>
        </Cell>
        任务管理器
        <Spacer />
        <WindowControls color="#999" />
      </TitleBar>
      <MenuBar>
        <span>文件(F)</span>
        <span>选项(O)</span>
        <span>查看(V)</span>
      </MenuBar>
      <TaskTabs>
        <TaskTab $active>进程</TaskTab>
        {["性能", "应用历史记录", "启动", "用户", "详细信息", "服务"].map((t) => (
          <TaskTab key={t}>{t}</TaskTab>
        ))}
      </TaskTabs>
      <TaskBody>
        <TableArea>
          <TaskTable>
            <colgroup>
              <Col $w={152} />
              <Col $w={47} />
              <Col $w={48} />
              <Col $w={48} />
              <Col $w={47} />
              <col />
            </colgroup>
            <thead>
              <tr>
                <th>名称</th>
                <th>
                  <Percent>19%</Percent>CPU
                </th>
                <th>
                  <Percent>38%</Percent>内存
                </th>
                <th>
                  <DiskHead>
                    <ChevronDown size={7} />
                    <Percent>83%</Percent>
                  </DiskHead>
                  磁盘
                </th>
                <th>
                  <Percent>0%</Percent>网络
                </th>
                <th />
              </tr>
            </thead>
            <tbody>
              {processes.map(([icon, name, cpu, mem, disk, net, level], i) => (
                <tr key={i}>
                  <ProcessCell>
                    <div>
                      <Arrow>{icon === "search" && <ChevronRight size={8} color="#888" />}</Arrow>
                      <ProcessIcon kind={icon} />
                      {name}
                    </div>
                  </ProcessCell>
                  <Value $heat={cpu === "0%" || !cpu ? 0 : 1}>{cpu}</Value>
                  <Value $heat={1}>{mem}</Value>
                  <Value $heat={level}>{disk}</Value>
                  <Value $heat={net === "0 Mbps" ? 0 : 1}>{net}</Value>
                  <td />
                </tr>
              ))}
            </tbody>
          </TaskTable>
        </TableArea>
        <Scrollbar $size={10} $track="#f0f0f0">
          <ScrollHead />
          <ScrollButton $size={10} aria-label="Up">
            <ChevronUp size={9} />
          </ScrollButton>
          <Track>
            <Thumb $grow={11} $color="#cdcdcd" />
            <Gap $grow={120} />
          </Track>
          <ScrollButton $size={10} aria-label="Down">
            <ChevronDown size={9} />
          </ScrollButton>
        </Scrollbar>
      </TaskBody>
      <TaskFooter>
        <CircleIcon>
          <ChevronUp size={9} />
        </CircleIcon>
        简略信息(D)
        <Spacer />
        <EndButton>结束任务(E)</EndButton>
      </TaskFooter>
    </Window>
  );
}

/* translucent mark laid over the lower right corner */
const Watermark = styled.svg`
  position: absolute;
  right: 50px;
  bottom: 20px;
  overflow: visible;
  pointer-events: none;
  font-family: "Noto Sans", "Noto Sans CJK SC", sans-serif;
  font-weight: 800;

  text, g {
    paint-order: stroke;
    stroke-width: 2px;
    stroke-linejoin: round;
  }
`;

const Meter = styled.div`
  position: absolute;
  right: -4px;
  bottom: 13px;
  width: 10px;
  height: 38px;
  border: 1px solid #d89b35;
  border-radius: 3px;
  background: linear-gradient(#33363f 60%, #3f9c84 60%);
`;

export default function App() {
  return (
    <>
      <GlobalStyle />
      <Desktop>
        <EdgeWindow />
        <ExplorerWindow />
        <QqBrowserWindow />
        <TaskManagerWindow />
        <Watermark width="184" height="92" viewBox="0 0 184 92" fill="#fff" stroke="#c8c8c8" opacity=".75">
          <text x="0" y="60" fontSize="39">
            Bai
          </text>
          <g transform="translate(65 4) scale(1.150)">
            <PawShape />
          </g>
          <text x="75" y="54" fontSize="25">
            du
          </text>
          <text x="117" y="58" fontSize="30">
            经验
          </text>
          <text x="2" y="82" fontSize="20" fontWeight="500">
            jingyan.baidu.com
          </text>
        </Watermark>
        <Meter />
      </Desktop>
    </>
  );
}
